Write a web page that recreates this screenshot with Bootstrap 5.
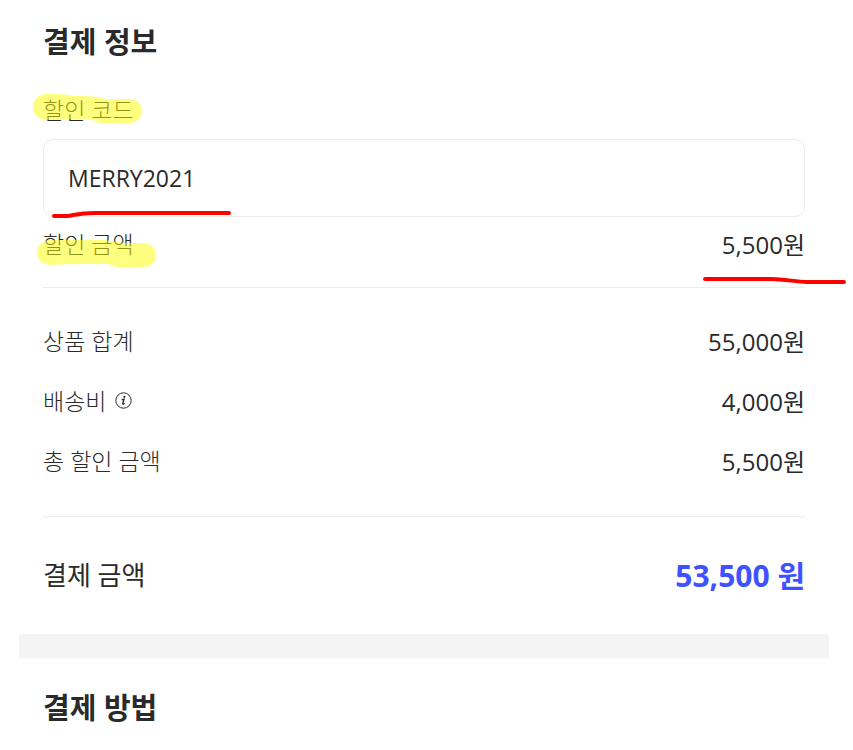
<!DOCTYPE html>
<html lang="ko">
<head>
<meta charset="utf-8">
<meta name="viewport" content="width=device-width, initial-scale=1">
<title>결제 정보</title>
<link href="https://cdn.jsdelivr.net/npm/bootstrap@5.3.0/dist/css/bootstrap.min.css" rel="stylesheet">
<style>
body { font-family: "Open Sans", "Noto Sans CJK KR", sans-serif; color: #2a2a2a; background: #fff; }
.checkout { padding: 0 24px 0 19px; }
.pay-section { padding: 0 24px; }
.pay-title { font-size: 29px; line-height: 36px; font-weight: 700; margin: 0; }
.code-head { margin: 36px 0 13px; }
.pay-label { font-size: 23px; line-height: 28px; font-weight: 300; padding-bottom: 2px; }
.pay-value { font-size: 24px; line-height: 28px; }
.code-input { height: 78px; padding: 0 24px; font-size: 23px; color: #2a2a2a; border-color: #ebebeb; border-radius: 10px; }
.discount-row { min-height: 56px; margin-bottom: 14px; }
.sum-row { min-height: 60px; }
.total-row { min-height: 117px; }
.total-label { font-size: 26px; }
.total-value { font-size: 30px; font-weight: 700; color: #3f52ff; }
.sum-list { padding: 24px 0; border: solid #ebebeb; border-width: 1px 0; }
.band { height: 24px; background: #f4f4f4; }
.pen { position: absolute; pointer-events: none; overflow: visible; fill: none; stroke-linecap: round; stroke-linejoin: round; }
.pen-red { stroke: #f00; stroke-width: 4px; }
.pen-yellow { fill: #ff0; fill-opacity: .5; }
.pen-code { left: -10px; top: -2px; }
.pen-input { left: 9px; bottom: 0; }
.pen-amount { left: -6px; top: 8px; }
.pen-price { right: -41px; top: 45px; }
</style>
<script src="https://cdn.jsdelivr.net/npm/bootstrap@5.3.0/dist/js/bootstrap.bundle.min.js"></script>
</head>
<body>
<main class="checkout">
  <section class="pay-section pt-4">
    <h1 class="pay-title">결제 정보</h1>
    <div class="code-head position-relative">
      <label class="pay-label d-block" for="code">할인 코드</label>
      <svg class="pen pen-yellow pen-code" width="109" height="31" aria-hidden="true"><path d="M14 0C22 0 34 0 42 2C54 2 64 2 70 5H96C104 5 109 10 109 17C109 24 104 29 96 29H70C64 29 61 27 58 25C40 25 28 25 14 26C5 26 0 20 0 13C0 6 5 0 14 0Z"/></svg>
    </div>
    <div class="position-relative">
      <input class="form-control code-input" id="code" type="text" value="MERRY2021">
      <svg class="pen pen-red pen-input" width="179" height="8" aria-hidden="true"><path d="M2 7H15C23 6 27 4 43 4H177"/></svg>
    </div>
    <div class="discount-row position-relative d-flex justify-content-between align-items-center">
      <span class="pay-label">할인 금액</span>
      <span class="pay-value">5,500원</span>
      <svg class="pen pen-yellow pen-amount" width="119" height="42" aria-hidden="true"><path d="M14 15H60C74 15 80 17 88 18H105C114 18 119 23 119 30C119 37 114 42 105 42H82C77 42 74 40 71 39C50 39 25 39 14 40C5 40 0 34 0 28C0 21 5 15 14 15Z"/></svg>
      <svg class="pen pen-red pen-price" width="143" height="24" aria-hidden="true"><path d="M2 17H68C82 17 93 20 104 20H141"/></svg>
    </div>
    <div class="sum-list">
      <div class="sum-row d-flex justify-content-between align-items-center">
        <span class="pay-label">상품 합계</span><span class="pay-value">55,000원</span>
      </div>
      <div class="sum-row d-flex justify-content-between align-items-center">
        <span class="pay-label d-flex align-items-center gap-2">배송비
          <svg width="18" height="18" viewBox="0 0 18 18" role="img" aria-label="배송비 안내"><circle cx="9.5" cy="8.5" r="7.7" fill="none" stroke="#2a2a2a" stroke-width="1"/><circle cx="10.4" cy="4.8" r="1.1" fill="#2a2a2a"/><path d="M7.7 7.6L10 7.2L8.8 11.6Q8.7 12.8 10.8 11.5" fill="none" stroke="#2a2a2a" stroke-width="1.4"/></svg>
        </span><span class="pay-value">4,000원</span>
      </div>
      <div class="sum-row d-flex justify-content-between align-items-center">
        <span class="pay-label">총 할인 금액</span><span class="pay-value">5,500원</span>
      </div>
    </div>
    <div class="total-row d-flex justify-content-between align-items-center">
      <span class="total-label">결제 금액</span><strong class="total-value">53,500 원</strong>
    </div>
  </section>
  <div class="band"></div>
  <section class="pay-section py-4">
    <h2 class="pay-title pt-2">결제 방법</h2>
  </section>
</main>
</body>
</html>
